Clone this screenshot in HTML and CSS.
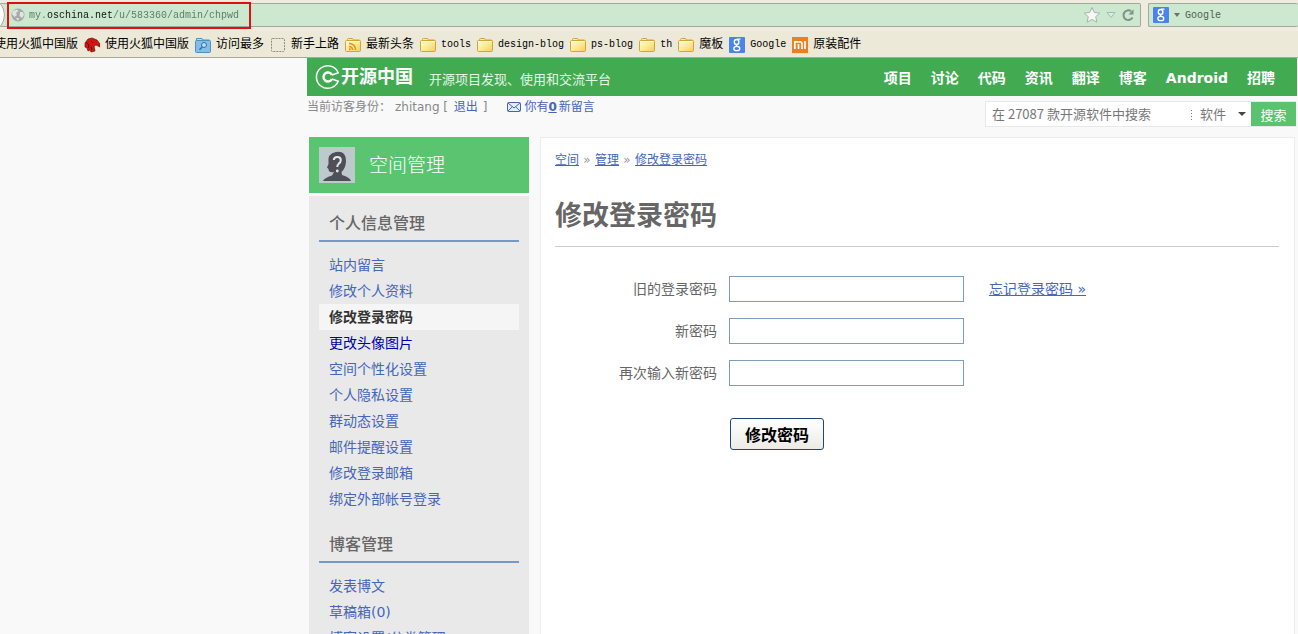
FILE: index.html
```
<!DOCTYPE html>
<html lang="zh-CN">
<head>
    <meta charset="UTF-8">
    <meta name="viewport" content="width=device-width, initial-scale=1.0">
    <title>修改登录密码 - 开源中国</title>
    <link rel="stylesheet" href="styles.css">
</head>
<body>
    <!-- shared icon shapes -->
    <svg class="defs" aria-hidden="true">
        <defs>
            <linearGradient id="folder-fill" x1="0" y1="0" x2="1" y2="1">
                <stop offset="0" stop-color="#fffbe0"/>
                <stop offset="0.5" stop-color="#ffeb94"/>
                <stop offset="1" stop-color="#f3cd5c"/>
            </linearGradient>
            <symbol id="folder" viewBox="0 0 16 16">
                <path d="M2.5 4V2.5Q2.5 1.5 3.5 1.5H7.500L8.500 3H14Q15 3 15 4" fill="#ffeda3" stroke="#d4a33c"/>
                <rect x="0.500" y="3.500" width="15" height="11" rx="1" fill="url(#folder-fill)" stroke="#d4a33c"/>
                <path d="M1.500 4.500H14.500" stroke="#fffdf0"/>
            </symbol>
            <symbol id="google" viewBox="0 0 16 16">
                <rect width="16" height="16" rx="1" fill="#4a82ee"/>
                <ellipse cx="7.600" cy="5" rx="2.300" ry="2.500" fill="none" stroke="#fff" stroke-width="1.400"/>
                <path d="M8 2.200H11.500M9.200 7.200C7 8 6.500 8.600 8.500 9.200" fill="none" stroke="#fff" stroke-width="1.200"/>
                <ellipse cx="7.800" cy="11.500" rx="3" ry="2.200" fill="none" stroke="#fff" stroke-width="1.300"/>
            </symbol>
        </defs>
    </svg>

    <div class="browser">
        <div class="toolbar">
            <div class="address">
                <svg class="back-edge" width="6" height="24" viewBox="0 0 6 24"><path d="M0 0Q9 12 0 24Z" fill="#fff"/><path d="M0 0Q9 12 0 24" fill="none" stroke="#aaa899"/></svg>
                <label class="globe" for="url" aria-label="地址">
                    <svg width="14" height="14" viewBox="0 0 14 14"><circle cx="7" cy="7" r="6.500" fill="#a5aaa9"/><path d="M2 3L6 1.500L7.500 3L5 5L6 7L3.500 9L1 6ZM9 4L12 4L13 7L11 10L8.500 8ZM5 10L8 10L7 13Z" fill="#dfe6e1"/></svg>
                </label>
                <input class="url" id="url" type="text" value="my.oschina.net/u/583360/admin/chpwd">
                <button class="tool" aria-label="收藏">
                    <svg width="18" height="18" viewBox="0 0 18 18"><path d="M9 1.500L11.300 6.500L16.800 7.100L12.700 10.700L13.900 16.200L9 13.400L4.100 16.200L5.300 10.700L1.200 7.100L6.700 6.500Z" fill="#f6f8f6" stroke="#a3b5a8"/></svg>
                </button>
                <button class="tool" aria-label="历史">
                    <svg width="10" height="8" viewBox="0 0 10 8"><path d="M1 1.500H9L5 6.500Z" fill="#dbeee6" stroke="#9fbcb4"/></svg>
                </button>
                <button class="tool" aria-label="刷新">
                    <svg width="14" height="14" viewBox="0 0 14 14"><path d="M11.500 9.500A4.800 4.800 0 1 1 10 3.200" fill="none" stroke="#7f9287" stroke-width="2"/><path d="M7.500 6.500H12.500V1.200Z" fill="#7f9287"/></svg>
                </button>
            </div>
            <div class="search-engine">
                <svg width="16" height="16"><use href="#google"/></svg>
                <svg width="6" height="4" viewBox="0 0 6 4"><path d="M0 0H6L3 4Z" fill="#66736a"/></svg>
                <input type="text" class="engine-input" aria-label="搜索引擎" placeholder="Google">
            </div>
            <div class="highlight"></div>
        </div>
        <div class="bookmarks">
            <a href="#">使用火狐中国版</a>
            <a href="#"><svg width="16" height="16" viewBox="0 0 16 16"><path d="M1 6L4 2L8 1L13 3L16 7V10L12 8L10 9L11 14L7 15L6 13L4 14L3 11L1 10Z" fill="#d5130f" stroke="#6c1510" stroke-width="0.700"/><path d="M2 5L5 8L4 11M7 4L9 6M7 10L8 13" stroke="#57110c" fill="none"/></svg>使用火狐中国版</a>
            <a href="#"><svg width="16" height="16" viewBox="0 0 16 16"><path d="M1.500 4V1.500H7L8 3H14.500V5" fill="#b9dcf4" stroke="#4d91c2"/><rect x="0.500" y="3.500" width="15" height="12" rx="1" fill="#83bde8" stroke="#4d91c2"/><circle cx="9" cy="8" r="2.500" fill="#b9def6" stroke="#2f6fa8"/><path d="M7.200 10L4.500 12.800" stroke="#2f6fa8" stroke-width="1.500"/></svg>访问最多</a>
            <a href="#"><svg width="16" height="16" viewBox="0 0 16 16"><rect x="1.500" y="1.500" width="13" height="13" rx="1" fill="none" stroke="#8b8b80" stroke-dasharray="2 1"/></svg>新手上路</a>
            <a href="#"><svg width="16" height="16"><use href="#folder"/><g fill="none" stroke="#ee8b19" stroke-width="1.500"><path d="M4 6.500A6 6 0 0 1 10.500 13M4 9.500A3.200 3.200 0 0 1 7.500 13"/></g><circle cx="4.800" cy="12.300" r="1" fill="#ee8b19"/></svg>最新头条</a>
            <a href="#" class="en"><svg width="16" height="16"><use href="#folder"/></svg>tools</a>
            <a href="#" class="en"><svg width="16" height="16"><use href="#folder"/></svg>design-blog</a>
            <a href="#" class="en"><svg width="16" height="16"><use href="#folder"/></svg>ps-blog</a>
            <a href="#" class="en"><svg width="16" height="16"><use href="#folder"/></svg>th</a>
            <a href="#"><svg width="16" height="16"><use href="#folder"/></svg>魔板</a>
            <a href="#" class="en"><svg width="16" height="16"><use href="#google"/></svg>Google</a>
            <a href="#"><svg width="16" height="16" viewBox="0 0 16 16"><rect width="16" height="16" fill="#ee7f1b"/><path d="M2.800 12V4.800H8Q10 4.800 10 7V12M6.500 7V12M13 4V12" fill="none" stroke="#fff" stroke-width="1.700"/></svg>原装配件</a>
        </div>
    </div>

    <div class="page">
        <header class="header">
            <a href="#" class="logo">
                <svg width="26" height="26" viewBox="0 0 26 26" fill="none" stroke="#fff"><path d="M23.200 8.800A11.300 11.300 0 1 0 23.200 17.200L17 15.300A4.600 4.600 0 1 1 17 10.700Z" stroke-width="1.500" stroke="none"/><path d="M17 11L23.200 8.800A11.300 11.300 0 1 0 23.200 17.200L17 15" stroke-width="1.500"/><path d="M17 11A4.500 4.500 0 1 0 17 15" stroke-width="2.400"/></svg>
                <span>开源中国</span>
            </a>
            <span class="slogan">开源项目发现、使用和交流平台</span>
            <nav class="nav">
                <a href="#">项目</a>
                <a href="#">讨论</a>
                <a href="#">代码</a>
                <a href="#">资讯</a>
                <a href="#">翻译</a>
                <a href="#">博客</a>
                <a href="#">Android</a>
                <a href="#">招聘</a>
            </nav>
        </header>

        <div class="userbar">
            <div class="visitor">
                <span>当前访客身份：</span>
                <span>zhitang [ <a href="#" class="logout">退出</a> ]</span>
                <a href="#" class="message"><svg width="14" height="10" viewBox="0 0 14 10"><rect x="0.500" y="0.500" width="13" height="9" rx="1" fill="#e5effb" stroke="#4566b8"/><path d="M1 1L7 6L13 1M1 9L5.300 4.800M13 9L8.700 4.800" fill="none" stroke="#4566b8"/></svg><span>你有<b>0</b>新留言</span></a>
            </div>
            <form class="search" action="#" method="get">
                <input type="text" name="q" aria-label="搜索" placeholder="在 27087 款开源软件中搜索">
                <select name="scope" aria-label="范围">
                    <option>软件</option>
                </select>
                <button type="submit">搜索</button>
            </form>
        </div>

        <div class="columns">
            <aside class="sidebar">
                <div class="space-title">
                    <svg width="36" height="36" viewBox="0 0 36 36"><rect width="36" height="36" fill="#bdcacd"/><path d="M4 34Q5 31 13 28.500L15 25Q9.500 26 9.500 22L8 20.500L9.500 17Q8 6 17 5Q27 3.500 27 14Q27 21 22.500 25L23 28Q31 30.500 32 34Z" fill="#504f57"/><path d="M14.800 13Q15 10 18.200 10Q21.800 10 21.800 13Q21.800 15.300 19.700 16.700Q18.300 17.800 18.300 20" fill="none" stroke="#e1e8ea" stroke-width="2"/><circle cx="18.300" cy="24" r="1.400" fill="#e1e8ea"/></svg>
                    <span>空间管理</span>
                </div>
                <div class="menu">
                    <h2>个人信息管理</h2>
                    <ul>
                        <li><a href="#">站内留言</a></li>
                        <li><a href="#">修改个人资料</a></li>
                        <li class="current"><a href="#">修改登录密码</a></li>
                        <li class="hover"><a href="#">更改头像图片</a></li>
                        <li><a href="#">空间个性化设置</a></li>
                        <li><a href="#">个人隐私设置</a></li>
                        <li><a href="#">群动态设置</a></li>
                        <li><a href="#">邮件提醒设置</a></li>
                        <li><a href="#">修改登录邮箱</a></li>
                        <li><a href="#">绑定外部帐号登录</a></li>
                    </ul>
                    <h2>博客管理</h2>
                    <ul>
                        <li><a href="#">发表博文</a></li>
                        <li><a href="#">草稿箱(0)</a></li>
                        <li><a href="#">博客设置/分类管理</a></li>
                    </ul>
                </div>
            </aside>

            <main class="content">
                <div class="crumbs"><a href="#">空间</a><span>»</span><a href="#">管理</a><span>»</span><a href="#">修改登录密码</a></div>
                <h1>修改登录密码</h1>
                <form class="pwd-form" action="#" method="post">
                    <label for="old_pwd">旧的登录密码</label>
                    <input type="password" id="old_pwd" name="old_pwd">
                    <a href="#">忘记登录密码 »</a>
                    <label for="new_pwd">新密码</label>
                    <input type="password" id="new_pwd" name="new_pwd">
                    <label for="new_pwd2">再次输入新密码</label>
                    <input type="password" id="new_pwd2" name="new_pwd2">
                    <button type="submit">修改密码</button>
                </form>
            </main>
        </div>
    </div>
</body>
</html>
```
FILE: styles.css
```
* {
    box-sizing: border-box;
}
body {
    display: flex;
    flex-direction: column;
    height: 100vh;
    margin: 0;
    overflow: hidden;
    background-color: #f9f9f9;
    font-family: "DejaVu Sans", "Noto Sans CJK SC", sans-serif;
    font-size: 12px;
    color: #666;
}
a {
    color: #4466bb;
    text-decoration: none;
}
input,
select,
button {
    margin: 0;
    font-family: inherit;
}
svg {
    flex: none;
}
.defs {
    position: absolute;
    width: 0;
    height: 0;
}

/* browser bars */
.browser {
    flex: none;
    background-color: #ece9d8;
    border-bottom: 1px solid #aca899;
    overflow: hidden;
}
.toolbar {
    position: relative;
    display: flex;
    gap: 7px;
    height: 31px;
    padding-top: 3px;
    background-color: #efebdf;
}
.address,
.search-engine {
    display: flex;
    align-items: center;
    height: 24px;
    background-color: #cce8cf;
    border: 1px solid #a2a89b;
    border-radius: 2px;
}
.address {
    flex: 1;
    gap: 5px;
    padding-right: 5px;
    border-left: none;
}
.globe {
    display: flex;
    margin-right: -1px;
}
.url,
.engine-input {
    height: 20px;
    padding: 0;
    border: none;
    background-color: transparent;
    font-family: "Liberation Mono", monospace;
    font-size: 10px;
}
.url {
    flex: 1;
    /* host name is darker than the rest of the address */
    background-image: linear-gradient(to right, #5d7562 3ch, #111 3ch, #111 14ch, #5d7562 14ch);
    background-clip: text;
    -webkit-background-clip: text;
    color: transparent;
}
.tool {
    display: flex;
    padding: 0;
    border: none;
    background: none;
}
.search-engine {
    flex: none;
    gap: 5px;
    width: 150px;
    padding-left: 4px;
    border-right: none;
}
.engine-input {
    width: 110px;
}
.engine-input::placeholder {
    color: #4c6151;
}
.highlight {
    position: absolute;
    top: 2px;
    left: 7px;
    width: 244px;
    height: 27px;
    border: 2px solid #e01010;
    pointer-events: none;
}
.bookmarks {
    display: flex;
    gap: 6px;
    height: 26px;
    margin-left: -6px;
    padding-top: 2px;
    line-height: 16px;
}
.bookmarks a {
    display: flex;
    align-items: center;
    gap: 5px;
    color: #000;
    font-family: "Liberation Mono", "Noto Sans CJK SC", monospace;
    font-size: 12px;
    white-space: nowrap;
}
.bookmarks .en {
    font-size: 10px;
}

/* site header */
.page {
    display: flex;
    flex: 1;
    flex-direction: column;
    width: 990px;
    min-height: 0;
    margin: 0 1px 0 auto;
}
.header {
    display: flex;
    flex: none;
    align-items: center;
    height: 38px;
    padding: 0 22px 0 8px;
    background-color: #42ab52;
    color: #fff;
}
.header a {
    color: #fff;
}
.logo {
    display: flex;
    align-items: center;
    font-size: 18px;
    font-weight: bold;
    line-height: 26px;
}
.slogan {
    margin-left: 16px;
    padding-top: 6px;
    color: #e4f7e6;
    font-size: 13px;
    line-height: 18px;
}
.nav {
    display: flex;
    gap: 19px;
    margin-left: auto;
    padding-top: 2px;
    font-size: 14px;
    font-weight: bold;
    line-height: 20px;
}
.userbar {
    display: flex;
    flex: none;
    justify-content: space-between;
    height: 41px;
    padding-right: 1px;
}
.visitor {
    display: flex;
    gap: 4px;
    padding-top: 2px;
    color: #888;
    line-height: 18px;
}
.logout {
    margin: 0 1px 0 2px;
}
.message {
    display: flex;
    align-items: center;
    align-self: flex-start;
    gap: 3px;
    margin-left: 16px;
}
.message b {
    margin-right: 2px;
    text-decoration: underline;
}
.search {
    display: flex;
    width: 311px;
    height: 26px;
    margin-top: 5px;
    border: 1px solid #e8e8e8;
    border-right: none;
    background-color: #fff;
}
.search input,
.search select,
.search button {
    border: none;
    border-radius: 0;
    background-color: transparent;
    font-family: "Noto Sans CJK SC", sans-serif;
    font-size: 13px;
}
.search input {
    flex: 1;
    min-width: 0;
    padding: 0 6px 2px;
}
.search input::placeholder {
    color: #777;
}
.search select {
    width: 60px;
    height: 24px;
    padding: 0 9px 2px;
    appearance: none;
    -webkit-appearance: none;
    color: #777;
    background-image: url("data:image/svg+xml,%3Csvg viewBox='0 0 8 4' xmlns='http://www.w3.org/2000/svg'%3E%3Cpath d='M0 0H8L4 4z' fill='%23444'/%3E%3C/svg%3E"), repeating-linear-gradient(#777 0, #777 1px, transparent 1px, transparent 3px);
    background-size: 8px 4px, 1px 10px;
    background-repeat: no-repeat;
    background-position: right 5px top 10px, left top 8px;
}
.search button {
    width: 45px;
    padding: 0;
    background-color: #5bc26f;
    color: #fff;
}

/* two columns */
.columns {
    display: flex;
    flex: 1;
    gap: 11px;
    min-height: 0;
    padding: 0 2px;
}
.sidebar {
    flex: none;
    width: 220px;
}
.space-title {
    display: flex;
    align-items: center;
    gap: 14px;
    height: 56px;
    padding: 0 10px;
    background-color: #5bc471;
    color: #fff;
    font-size: 19px;
    font-weight: 300;
    line-height: 24px;
}
.menu {
    margin-top: 3px;
    padding: 10px 10px 0;
    background-color: #e9e9e9;
}
.menu h2 {
    height: 36px;
    margin: 0 0 10px;
    padding: 0 10px;
    border-bottom: 2px solid #7499c9;
    color: #666;
    font-size: 16px;
    font-weight: 500;
    line-height: 36px;
}
.menu ul {
    margin: 0 0 15px;
    padding: 0;
    list-style: none;
}
.menu li {
    height: 26px;
    padding: 0 10px;
    font-size: 14px;
    line-height: 26px;
}
.menu .current {
    background-color: #f5f5f5;
    font-weight: bold;
}
.menu .current a {
    color: #333;
}
.menu .hover a {
    color: #0000aa;
}
.content {
    flex: 1;
    padding: 13px 15px 13px 14px;
    border: 1px solid #ececec;
    border-bottom: none;
    background-color: #fff;
}
.crumbs {
    display: flex;
    line-height: 18px;
}
.crumbs a {
    text-decoration: underline;
}
.crumbs span {
    width: 16px;
    color: #999;
    text-align: center;
}
h1 {
    height: 61px;
    margin: 17px 0 29px;
    border-bottom: 1px solid #ccc;
    color: #666;
    font-size: 27px;
    line-height: 60px;
}
.pwd-form {
    display: grid;
    grid-template-columns: 162px 235px 1fr;
    gap: 16px 12px;
    align-items: center;
    font-size: 14px;
    line-height: 26px;
}
.pwd-form label {
    grid-column: 1;
    text-align: right;
}
.pwd-form input {
    height: 26px;
    border: 1px solid #7f9db9;
    background-color: #fff;
}
.pwd-form a {
    padding-left: 13px;
    text-decoration: underline;
}
.pwd-form button {
    grid-column: 2;
    justify-self: start;
    width: 94px;
    height: 32px;
    margin: 16px 1px;
    padding: 0;
    border: 1px solid #1c4a74;
    border-radius: 3px;
    background: linear-gradient(#fff, #ecebe5);
    color: #000;
    font-size: 16px;
    font-weight: bold;
}
```
